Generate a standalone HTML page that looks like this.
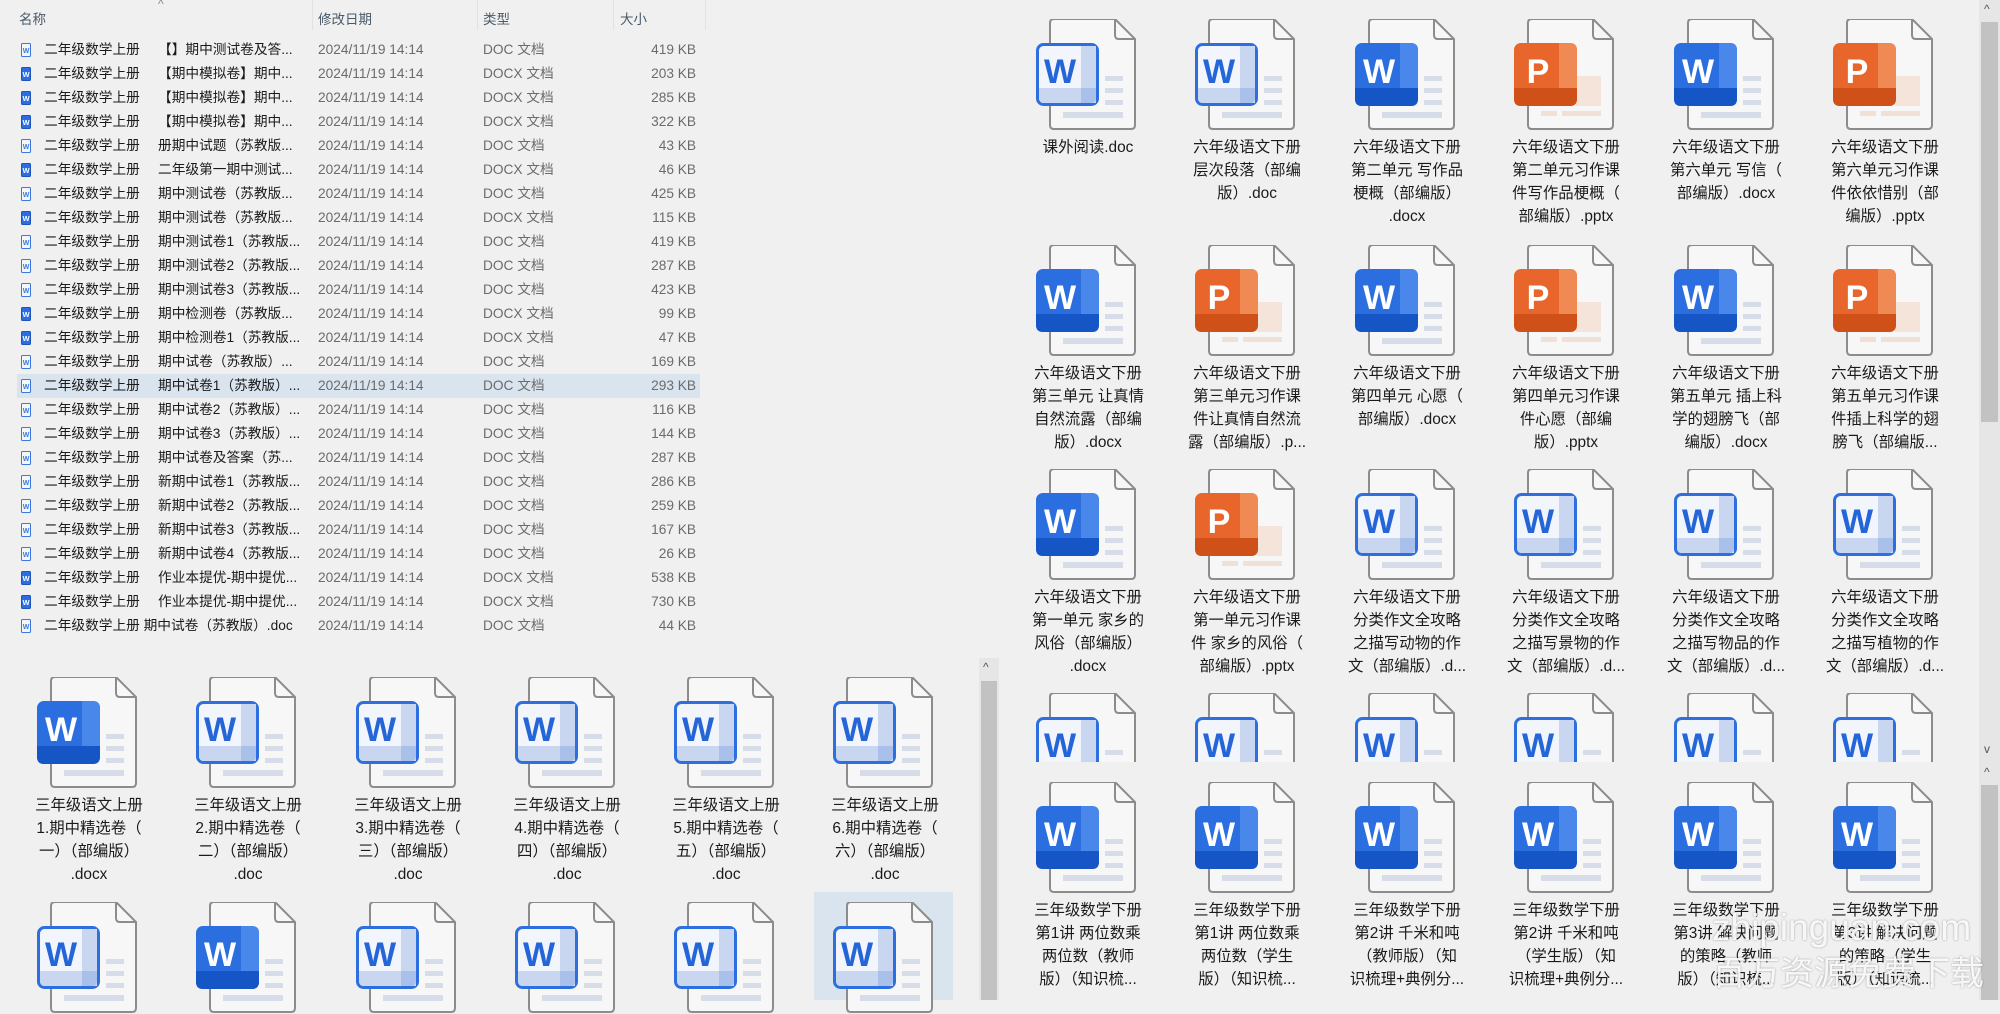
<!DOCTYPE html>
<html><head><meta charset="utf-8">
<style>
*{margin:0;padding:0;box-sizing:border-box}
body{width:2000px;height:1000px;background:#f0f0f0;position:relative;overflow:hidden;font-family:"Liberation Sans","Noto Sans CJK SC",sans-serif}
.a{position:absolute}
.hd{position:absolute;top:8px;font-size:13.5px;color:#4a5a6a}
.sep{position:absolute;top:0;width:1px;height:30px;background:#e2e2e2}
.row{position:absolute;left:0;width:710px;height:24px;font-size:13.7px;line-height:24px;white-space:nowrap}
.row .n1{position:absolute;left:44px;color:#1a1a1a}
.row .n2{position:absolute;left:158px;color:#1a1a1a}
.row .d{position:absolute;left:318px;color:#6b6b6b}
.row .t{position:absolute;left:483px;color:#6b6b6b}
.row .s{position:absolute;right:14px;color:#6b6b6b}
.row svg{position:absolute;left:21px;top:5px}
.ic{position:absolute;width:100px;height:112px}
.lb{position:absolute;width:150px;text-align:center;font-size:15.4px;line-height:23px;color:#1a1a1a;white-space:nowrap}
.cut{position:absolute;overflow:hidden;height:69px;width:100px}
</style></head><body>
<svg width="0" height="0" style="position:absolute">
<defs>
<symbol id="pg" viewBox="0 0 100 112">
<path d="M14,4 q0,-4 4,-4 H79 L99,20 V106 q0,4 -4,4 H18 q-4,0 -4,-4 Z" fill="#f7f7f7" stroke="#8c8c8c" stroke-width="2"/>
<path d="M79,0 V16 q0,4 4,4 H99" fill="none" stroke="#8c8c8c" stroke-width="2"/>
</symbol>
<symbol id="wn" viewBox="0 0 100 112">
<use href="#pg"/>
<rect x="69" y="57" width="18" height="5" fill="#d6dde8"/><rect x="69" y="69" width="18" height="5" fill="#d6dde8"/><rect x="69" y="81" width="18" height="5" fill="#d6dde8"/><rect x="27" y="93" width="60" height="6" fill="#d6dde8"/>
<rect x="0" y="24" width="63" height="63" rx="7" fill="#2a6ee0"/>
<path d="M45,24 H56 q7,0 7,7 V70 H45 Z" fill="#4a87ea"/>
<path d="M0,69 H63 V80 q0,7 -7,7 H7 q-7,0 -7,-7 Z" fill="#1555c6"/>
<text x="24" y="64" font-family="Liberation Sans" font-weight="bold" font-size="34" fill="#fff" text-anchor="middle">W</text>
</symbol>
<symbol id="wo" viewBox="0 0 100 112">
<use href="#pg"/>
<rect x="69" y="57" width="18" height="5" fill="#d6dde8"/><rect x="69" y="69" width="18" height="5" fill="#d6dde8"/><rect x="69" y="81" width="18" height="5" fill="#d6dde8"/><rect x="27" y="93" width="60" height="6" fill="#d6dde8"/>
<rect x="1.5" y="25.5" width="60" height="60" rx="6" fill="#f2f5fb" stroke="#2e6fe0" stroke-width="3"/>
<rect x="45" y="27" width="15" height="57" fill="#c8d6f0"/>
<path d="M3,69 H60 V79 q0,5 -5,5 H8 q-5,0 -5,-5 Z" fill="#c8d6f0"/>
<path d="M45,69 H60 V79 q0,5 -5,5 H45 Z" fill="#a8c0ea"/>
<text x="24" y="64" font-family="Liberation Sans" font-weight="bold" font-size="34" fill="#2465d8" text-anchor="middle">W</text>
</symbol>
<symbol id="pp" viewBox="0 0 100 112">
<use href="#pg"/>
<rect x="62" y="57" width="25" height="30" fill="#f4e4da"/><rect x="27" y="92" width="16" height="5" fill="#f1e0d5"/><rect x="48" y="92" width="39" height="5" fill="#f1e0d5"/>
<rect x="0" y="24" width="63" height="63" rx="7" fill="#e8652b"/>
<path d="M45,24 H56 q7,0 7,7 V70 H45 Z" fill="#f08a55"/>
<path d="M0,69 H63 V80 q0,7 -7,7 H7 q-7,0 -7,-7 Z" fill="#cf5018"/>
<text x="24" y="64" font-family="Liberation Sans" font-weight="bold" font-size="34" fill="#fff" text-anchor="middle">P</text>
</symbol>
<symbol id="so" viewBox="0 0 10 14"><path d="M0.5,1.5 q0,-1 1,-1 H8.5 q1,0 1,1 V12.5 q0,1 -1,1 H1.5 q-1,0 -1,-1 Z" fill="#f4f7fc" stroke="#3b78dc"/><text x="5" y="10" font-size="7" font-family="Liberation Sans" font-weight="bold" fill="#3b78dc" text-anchor="middle">W</text></symbol>
<symbol id="sn" viewBox="0 0 10 14"><path d="M0.5,1.5 q0,-1 1,-1 H8.5 q1,0 1,1 V12.5 q0,1 -1,1 H1.5 q-1,0 -1,-1 Z" fill="#2a6ee0" stroke="#1a55c0"/><text x="5" y="10" font-size="7.5" font-family="Liberation Sans" font-weight="bold" fill="#fff" text-anchor="middle">W</text></symbol>
</defs></svg>

<div class="hd" style="left:19px">名称</div>
<div class="a" style="left:158px;top:-3px;font-size:12px;color:#888">^</div>
<div class="hd" style="left:318px">修改日期</div>
<div class="hd" style="left:483px">类型</div>
<div class="hd" style="left:620px">大小</div>
<div class="sep" style="left:312px"></div><div class="sep" style="left:477px"></div><div class="sep" style="left:613px"></div><div class="sep" style="left:705px"></div>

<div class="a" style="left:17px;top:374px;width:683px;height:24px;background:#d9e4ef"></div>

<div class="row" style="top:38px"><svg width="10" height="14"><use href="#so"/></svg><span class="n1">二年级数学上册</span><span class="n2">【】期中测试卷及答...</span><span class="d">2024/11/19 14:14</span><span class="t">DOC 文档</span><span class="s">419 KB</span></div>
<div class="row" style="top:62px"><svg width="10" height="14"><use href="#sn"/></svg><span class="n1">二年级数学上册</span><span class="n2">【期中模拟卷】期中...</span><span class="d">2024/11/19 14:14</span><span class="t">DOCX 文档</span><span class="s">203 KB</span></div>
<div class="row" style="top:86px"><svg width="10" height="14"><use href="#sn"/></svg><span class="n1">二年级数学上册</span><span class="n2">【期中模拟卷】期中...</span><span class="d">2024/11/19 14:14</span><span class="t">DOCX 文档</span><span class="s">285 KB</span></div>
<div class="row" style="top:110px"><svg width="10" height="14"><use href="#sn"/></svg><span class="n1">二年级数学上册</span><span class="n2">【期中模拟卷】期中...</span><span class="d">2024/11/19 14:14</span><span class="t">DOCX 文档</span><span class="s">322 KB</span></div>
<div class="row" style="top:134px"><svg width="10" height="14"><use href="#so"/></svg><span class="n1">二年级数学上册</span><span class="n2">册期中试题（苏教版...</span><span class="d">2024/11/19 14:14</span><span class="t">DOC 文档</span><span class="s">43 KB</span></div>
<div class="row" style="top:158px"><svg width="10" height="14"><use href="#sn"/></svg><span class="n1">二年级数学上册</span><span class="n2">二年级第一期中测试...</span><span class="d">2024/11/19 14:14</span><span class="t">DOCX 文档</span><span class="s">46 KB</span></div>
<div class="row" style="top:182px"><svg width="10" height="14"><use href="#so"/></svg><span class="n1">二年级数学上册</span><span class="n2">期中测试卷（苏教版...</span><span class="d">2024/11/19 14:14</span><span class="t">DOC 文档</span><span class="s">425 KB</span></div>
<div class="row" style="top:206px"><svg width="10" height="14"><use href="#sn"/></svg><span class="n1">二年级数学上册</span><span class="n2">期中测试卷（苏教版...</span><span class="d">2024/11/19 14:14</span><span class="t">DOCX 文档</span><span class="s">115 KB</span></div>
<div class="row" style="top:230px"><svg width="10" height="14"><use href="#so"/></svg><span class="n1">二年级数学上册</span><span class="n2">期中测试卷1（苏教版...</span><span class="d">2024/11/19 14:14</span><span class="t">DOC 文档</span><span class="s">419 KB</span></div>
<div class="row" style="top:254px"><svg width="10" height="14"><use href="#so"/></svg><span class="n1">二年级数学上册</span><span class="n2">期中测试卷2（苏教版...</span><span class="d">2024/11/19 14:14</span><span class="t">DOC 文档</span><span class="s">287 KB</span></div>
<div class="row" style="top:278px"><svg width="10" height="14"><use href="#so"/></svg><span class="n1">二年级数学上册</span><span class="n2">期中测试卷3（苏教版...</span><span class="d">2024/11/19 14:14</span><span class="t">DOC 文档</span><span class="s">423 KB</span></div>
<div class="row" style="top:302px"><svg width="10" height="14"><use href="#sn"/></svg><span class="n1">二年级数学上册</span><span class="n2">期中检测卷（苏教版...</span><span class="d">2024/11/19 14:14</span><span class="t">DOCX 文档</span><span class="s">99 KB</span></div>
<div class="row" style="top:326px"><svg width="10" height="14"><use href="#sn"/></svg><span class="n1">二年级数学上册</span><span class="n2">期中检测卷1（苏教版...</span><span class="d">2024/11/19 14:14</span><span class="t">DOCX 文档</span><span class="s">47 KB</span></div>
<div class="row" style="top:350px"><svg width="10" height="14"><use href="#so"/></svg><span class="n1">二年级数学上册</span><span class="n2">期中试卷（苏教版）...</span><span class="d">2024/11/19 14:14</span><span class="t">DOC 文档</span><span class="s">169 KB</span></div>
<div class="row" style="top:374px"><svg width="10" height="14"><use href="#so"/></svg><span class="n1">二年级数学上册</span><span class="n2">期中试卷1（苏教版）...</span><span class="d">2024/11/19 14:14</span><span class="t">DOC 文档</span><span class="s">293 KB</span></div>
<div class="row" style="top:398px"><svg width="10" height="14"><use href="#so"/></svg><span class="n1">二年级数学上册</span><span class="n2">期中试卷2（苏教版）...</span><span class="d">2024/11/19 14:14</span><span class="t">DOC 文档</span><span class="s">116 KB</span></div>
<div class="row" style="top:422px"><svg width="10" height="14"><use href="#so"/></svg><span class="n1">二年级数学上册</span><span class="n2">期中试卷3（苏教版）...</span><span class="d">2024/11/19 14:14</span><span class="t">DOC 文档</span><span class="s">144 KB</span></div>
<div class="row" style="top:446px"><svg width="10" height="14"><use href="#so"/></svg><span class="n1">二年级数学上册</span><span class="n2">期中试卷及答案（苏...</span><span class="d">2024/11/19 14:14</span><span class="t">DOC 文档</span><span class="s">287 KB</span></div>
<div class="row" style="top:470px"><svg width="10" height="14"><use href="#so"/></svg><span class="n1">二年级数学上册</span><span class="n2">新期中试卷1（苏教版...</span><span class="d">2024/11/19 14:14</span><span class="t">DOC 文档</span><span class="s">286 KB</span></div>
<div class="row" style="top:494px"><svg width="10" height="14"><use href="#so"/></svg><span class="n1">二年级数学上册</span><span class="n2">新期中试卷2（苏教版...</span><span class="d">2024/11/19 14:14</span><span class="t">DOC 文档</span><span class="s">259 KB</span></div>
<div class="row" style="top:518px"><svg width="10" height="14"><use href="#so"/></svg><span class="n1">二年级数学上册</span><span class="n2">新期中试卷3（苏教版...</span><span class="d">2024/11/19 14:14</span><span class="t">DOC 文档</span><span class="s">167 KB</span></div>
<div class="row" style="top:542px"><svg width="10" height="14"><use href="#so"/></svg><span class="n1">二年级数学上册</span><span class="n2">新期中试卷4（苏教版...</span><span class="d">2024/11/19 14:14</span><span class="t">DOC 文档</span><span class="s">26 KB</span></div>
<div class="row" style="top:566px"><svg width="10" height="14"><use href="#sn"/></svg><span class="n1">二年级数学上册</span><span class="n2">作业本提优-期中提优...</span><span class="d">2024/11/19 14:14</span><span class="t">DOCX 文档</span><span class="s">538 KB</span></div>
<div class="row" style="top:590px"><svg width="10" height="14"><use href="#sn"/></svg><span class="n1">二年级数学上册</span><span class="n2">作业本提优-期中提优...</span><span class="d">2024/11/19 14:14</span><span class="t">DOCX 文档</span><span class="s">730 KB</span></div>
<div class="row" style="top:614px"><svg width="10" height="14"><use href="#so"/></svg><span class="n1">二年级数学上册 期中试卷（苏教版）.doc</span><span class="d">2024/11/19 14:14</span><span class="t">DOC 文档</span><span class="s">44 KB</span></div>

<div class="a" style="left:979px;top:658px;width:20px;height:342px;background:#e6e6e6"></div>
<div class="a" style="left:981px;top:681px;width:16px;height:319px;background:#c2c2c2"></div>
<div class="a" style="left:983px;top:660px;font-size:12px;color:#555">^</div>

<div class="a" style="left:814px;top:892px;width:139px;height:108px;background:#d9e4ef"></div>
<svg class="ic" style="left:37px;top:677px"><use href="#wn"/></svg>
<svg class="ic" style="left:196px;top:677px"><use href="#wo"/></svg>
<svg class="ic" style="left:356px;top:677px"><use href="#wo"/></svg>
<svg class="ic" style="left:515px;top:677px"><use href="#wo"/></svg>
<svg class="ic" style="left:674px;top:677px"><use href="#wo"/></svg>
<svg class="ic" style="left:833px;top:677px"><use href="#wo"/></svg>
<div class="lb" style="left:14px;top:794px">三年级语文上册<br>1.期中精选卷（<br>一）（部编版）<br>.docx</div>
<div class="lb" style="left:173px;top:794px">三年级语文上册<br>2.期中精选卷（<br>二）（部编版）<br>.doc</div>
<div class="lb" style="left:333px;top:794px">三年级语文上册<br>3.期中精选卷（<br>三）（部编版）<br>.doc</div>
<div class="lb" style="left:492px;top:794px">三年级语文上册<br>4.期中精选卷（<br>四）（部编版）<br>.doc</div>
<div class="lb" style="left:651px;top:794px">三年级语文上册<br>5.期中精选卷（<br>五）（部编版）<br>.doc</div>
<div class="lb" style="left:810px;top:794px">三年级语文上册<br>6.期中精选卷（<br>六）（部编版）<br>.doc</div>
<svg class="ic" style="left:37px;top:902px"><use href="#wo"/></svg>
<svg class="ic" style="left:196px;top:902px"><use href="#wn"/></svg>
<svg class="ic" style="left:356px;top:902px"><use href="#wo"/></svg>
<svg class="ic" style="left:515px;top:902px"><use href="#wo"/></svg>
<svg class="ic" style="left:674px;top:902px"><use href="#wo"/></svg>
<svg class="ic" style="left:833px;top:902px"><use href="#wo"/></svg>

<div class="a" style="left:1979px;top:0;width:21px;height:1000px;background:#e6e6e6"></div>
<div class="a" style="left:1981px;top:22px;width:17px;height:400px;background:#c2c2c2"></div>
<div class="a" style="left:1981px;top:785px;width:17px;height:215px;background:#c2c2c2"></div>
<div class="a" style="left:1984px;top:2px;font-size:12px;color:#555">^</div>
<div class="a" style="left:1984px;top:742px;font-size:12px;color:#555">v</div>
<div class="a" style="left:1984px;top:765px;font-size:12px;color:#555">^</div>

<svg class="ic" style="left:1036px;top:19px"><use href="#wo"/></svg>
<svg class="ic" style="left:1195px;top:19px"><use href="#wo"/></svg>
<svg class="ic" style="left:1355px;top:19px"><use href="#wn"/></svg>
<svg class="ic" style="left:1514px;top:19px"><use href="#pp"/></svg>
<svg class="ic" style="left:1674px;top:19px"><use href="#wn"/></svg>
<svg class="ic" style="left:1833px;top:19px"><use href="#pp"/></svg>
<div class="lb" style="left:1013px;top:136px">课外阅读.doc</div>
<div class="lb" style="left:1172px;top:136px">六年级语文下册<br>层次段落（部编<br>版）.doc</div>
<div class="lb" style="left:1332px;top:136px">六年级语文下册<br>第二单元 写作品<br>梗概（部编版）<br>.docx</div>
<div class="lb" style="left:1491px;top:136px">六年级语文下册<br>第二单元习作课<br>件写作品梗概（<br>部编版）.pptx</div>
<div class="lb" style="left:1651px;top:136px">六年级语文下册<br>第六单元 写信（<br>部编版）.docx</div>
<div class="lb" style="left:1810px;top:136px">六年级语文下册<br>第六单元习作课<br>件依依惜别（部<br>编版）.pptx</div>

<svg class="ic" style="left:1036px;top:245px"><use href="#wn"/></svg>
<svg class="ic" style="left:1195px;top:245px"><use href="#pp"/></svg>
<svg class="ic" style="left:1355px;top:245px"><use href="#wn"/></svg>
<svg class="ic" style="left:1514px;top:245px"><use href="#pp"/></svg>
<svg class="ic" style="left:1674px;top:245px"><use href="#wn"/></svg>
<svg class="ic" style="left:1833px;top:245px"><use href="#pp"/></svg>
<div class="lb" style="left:1013px;top:362px">六年级语文下册<br>第三单元 让真情<br>自然流露（部编<br>版）.docx</div>
<div class="lb" style="left:1172px;top:362px">六年级语文下册<br>第三单元习作课<br>件让真情自然流<br>露（部编版）.p...</div>
<div class="lb" style="left:1332px;top:362px">六年级语文下册<br>第四单元 心愿（<br>部编版）.docx</div>
<div class="lb" style="left:1491px;top:362px">六年级语文下册<br>第四单元习作课<br>件心愿（部编<br>版）.pptx</div>
<div class="lb" style="left:1651px;top:362px">六年级语文下册<br>第五单元 插上科<br>学的翅膀飞（部<br>编版）.docx</div>
<div class="lb" style="left:1810px;top:362px">六年级语文下册<br>第五单元习作课<br>件插上科学的翅<br>膀飞（部编版...</div>

<svg class="ic" style="left:1036px;top:469px"><use href="#wn"/></svg>
<svg class="ic" style="left:1195px;top:469px"><use href="#pp"/></svg>
<svg class="ic" style="left:1355px;top:469px"><use href="#wo"/></svg>
<svg class="ic" style="left:1514px;top:469px"><use href="#wo"/></svg>
<svg class="ic" style="left:1674px;top:469px"><use href="#wo"/></svg>
<svg class="ic" style="left:1833px;top:469px"><use href="#wo"/></svg>
<div class="lb" style="left:1013px;top:586px">六年级语文下册<br>第一单元 家乡的<br>风俗（部编版）<br>.docx</div>
<div class="lb" style="left:1172px;top:586px">六年级语文下册<br>第一单元习作课<br>件 家乡的风俗（<br>部编版）.pptx</div>
<div class="lb" style="left:1332px;top:586px">六年级语文下册<br>分类作文全攻略<br>之描写动物的作<br>文（部编版）.d...</div>
<div class="lb" style="left:1491px;top:586px">六年级语文下册<br>分类作文全攻略<br>之描写景物的作<br>文（部编版）.d...</div>
<div class="lb" style="left:1651px;top:586px">六年级语文下册<br>分类作文全攻略<br>之描写物品的作<br>文（部编版）.d...</div>
<div class="lb" style="left:1810px;top:586px">六年级语文下册<br>分类作文全攻略<br>之描写植物的作<br>文（部编版）.d...</div>

<div class="cut" style="left:1036px;top:693px"><svg class="ic" style="left:0;top:0"><use href="#wo"/></svg></div>
<div class="cut" style="left:1195px;top:693px"><svg class="ic" style="left:0;top:0"><use href="#wo"/></svg></div>
<div class="cut" style="left:1355px;top:693px"><svg class="ic" style="left:0;top:0"><use href="#wo"/></svg></div>
<div class="cut" style="left:1514px;top:693px"><svg class="ic" style="left:0;top:0"><use href="#wo"/></svg></div>
<div class="cut" style="left:1674px;top:693px"><svg class="ic" style="left:0;top:0"><use href="#wo"/></svg></div>
<div class="cut" style="left:1833px;top:693px"><svg class="ic" style="left:0;top:0"><use href="#wo"/></svg></div>

<svg class="ic" style="left:1036px;top:782px"><use href="#wn"/></svg>
<svg class="ic" style="left:1195px;top:782px"><use href="#wn"/></svg>
<svg class="ic" style="left:1355px;top:782px"><use href="#wn"/></svg>
<svg class="ic" style="left:1514px;top:782px"><use href="#wn"/></svg>
<svg class="ic" style="left:1674px;top:782px"><use href="#wn"/></svg>
<svg class="ic" style="left:1833px;top:782px"><use href="#wn"/></svg>
<div class="lb" style="left:1013px;top:899px">三年级数学下册<br>第1讲 两位数乘<br>两位数（教师<br>版）（知识梳...</div>
<div class="lb" style="left:1172px;top:899px">三年级数学下册<br>第1讲 两位数乘<br>两位数（学生<br>版）（知识梳...</div>
<div class="lb" style="left:1332px;top:899px">三年级数学下册<br>第2讲 千米和吨<br>（教师版）（知<br>识梳理+典例分...</div>
<div class="lb" style="left:1491px;top:899px">三年级数学下册<br>第2讲 千米和吨<br>（学生版）（知<br>识梳理+典例分...</div>
<div class="lb" style="left:1651px;top:899px">三年级数学下册<br>第3讲 解决问题<br>的策略（教师<br>版）（知识梳...</div>
<div class="lb" style="left:1810px;top:899px">三年级数学下册<br>第3讲 解决问题<br>的策略（学生<br>版）（知识梳...</div>

<div class="a" style="left:1712px;top:906px;font-size:37px;line-height:44px;color:rgba(255,255,255,0.9);text-shadow:0 0 2px rgba(0,0,0,0.35);font-family:'Liberation Sans',sans-serif;white-space:nowrap">zhipinguan.com</div>
<div class="a" style="left:1712px;top:952px;font-size:34px;line-height:44px;color:rgba(255,255,255,0.9);text-shadow:0 0 2px rgba(0,0,0,0.35);font-family:'Liberation Sans','Noto Sans CJK SC',sans-serif;white-space:nowrap">百万资源免费下载</div>
</body></html>
